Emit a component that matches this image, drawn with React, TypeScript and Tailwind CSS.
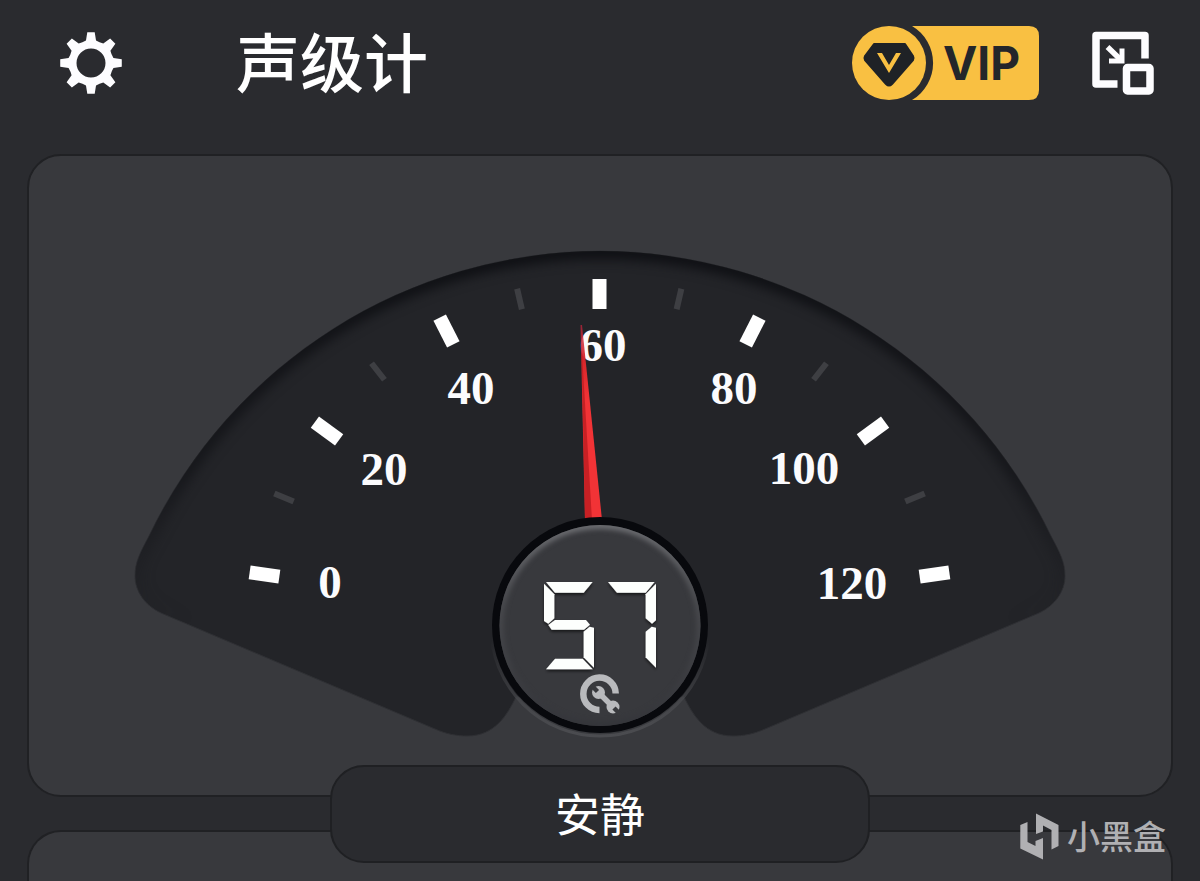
type Tick = { x: number; y: number; angle: number };
type Label = { value: number; x: number; y: number };
type SegmentName = "a" | "b" | "c" | "d" | "e" | "f" | "g";

const majorTicks: Tick[] = [
  { x: 264.5, y: 574.5, angle: -82 },
  { x: 327, y: 431, angle: -54 },
  { x: 446.5, y: 331, angle: -27 },
  { x: 599.5, y: 294, angle: 0 },
  { x: 752.5, y: 331, angle: 27 },
  { x: 873, y: 431, angle: 54 },
  { x: 934.5, y: 574.5, angle: 82 },
];

const minorTicks: Tick[] = [
  { x: 284, y: 497.5, angle: -67 },
  { x: 378, y: 371.5, angle: -38 },
  { x: 519.5, y: 299, angle: -13 },
  { x: 679, y: 299, angle: 13 },
  { x: 820, y: 371.5, angle: 38 },
  { x: 915, y: 497.5, angle: 67 },
];

const labels: Label[] = [
  { value: 0, x: 330, y: 598 },
  { value: 20, x: 384, y: 485 },
  { value: 40, x: 471, y: 404 },
  { value: 60, x: 603, y: 361 },
  { value: 80, x: 734, y: 404 },
  { value: 100, x: 804, y: 484 },
  { value: 120, x: 852, y: 599 },
];

const segmentPoints: Record<SegmentName, string> = {
  a: "6,0 146,0 119,32 33,32",
  b: "150,5 150,115 138,125 119,109 119,37",
  c: "150,137 150,257 119,226 119,149 137,134",
  d: "33,230 116,230 146,262 6,262",
  e: "0,137 0,257 31,226 31,149 13,134",
  f: "0,5 31,37 31,109 13,125 0,117",
  g: "13,129 33,114 126,114 138,128 120,143 23,143",
};

const digitSegments: Record<string, SegmentName[]> = {
  "0": ["a", "b", "c", "d", "e", "f"],
  "1": ["b", "c"],
  "2": ["a", "b", "g", "e", "d"],
  "3": ["a", "b", "g", "c", "d"],
  "4": ["f", "g", "b", "c"],
  "5": ["a", "f", "g", "c", "d"],
  "6": ["a", "f", "g", "c", "d", "e"],
  "7": ["a", "b", "c"],
  "8": ["a", "b", "c", "d", "e", "f", "g"],
  "9": ["a", "b", "c", "d", "f", "g"],
};

const dialPath =
  "M600 251 A502 502 0 0 1 1051 536 C1060 553 1065 562 1065 576 C1065 592 1054 606 1039 613 L765 729 C754 734 743 736 733 736 C705 736 693 715 684 697 H516 C507 715 495 736 467 736 C457 736 446 734 435 729 L161 613 C146 606 135 592 135 576 C135 562 140 553 149 536 A502 502 0 0 1 600 251 Z";

function gearPath(): string {
  const parts: string[] = [];
  for (let i = 0; i < 8; i++) {
    const base = (i * Math.PI) / 4;
    const at = (radius: number, offset: number) =>
      `${(35 + radius * Math.sin(base + offset)).toFixed(2)} ${(35 - radius * Math.cos(base + offset)).toFixed(2)}`;
    parts.push(
      `${i === 0 ? "M" : "L"}${at(23, -0.22)} L${at(31, -0.12)} L${at(31, 0.12)} L${at(23, 0.22)} Q${at(22, 0.39)} ${at(23, 0.565)}`,
    );
  }
  return `${parts.join(" ")} Z M35 20.5 a14.5 14.5 0 1 0 0 29 a14.5 14.5 0 1 0 0 -29 Z`;
}

function SevenSegment({ value, x, y }: { value: number; x: number; y: number }) {
  return (
    <g role="img" aria-label={String(value)} filter="url(#digitShadow)">
      {String(value)
        .split("")
        .map((digit, index) => (
          <g key={index} transform={`translate(${x + index * 62} ${y}) scale(0.3333)`}>
            {digitSegments[digit].map((name) => (
              <polygon key={name} points={segmentPoints[name]} fill="#fdfffd" />
            ))}
          </g>
        ))}
    </g>
  );
}

function Gauge({ value }: { value: number }) {
  return (
    <svg viewBox="29 156 1142 639" className="block h-auto w-full">
      <defs>
        <linearGradient id="needle" x1="0" y1="325" x2="0" y2="400" gradientUnits="userSpaceOnUse">
          <stop offset="0" stopColor="#c8243c" stopOpacity="0.7" />
          <stop offset="0.5" stopColor="#d8282c" />
          <stop offset="1" stopColor="#f23336" />
        </linearGradient>
        <linearGradient id="hubRim" x1="0" y1="525" x2="0" y2="726" gradientUnits="userSpaceOnUse">
          <stop offset="0" stopColor="#6c6d71" />
          <stop offset="0.4" stopColor="#48494d" />
          <stop offset="1" stopColor="#34353a" />
        </linearGradient>
        <linearGradient id="hubEdge" x1="0" y1="640" x2="0" y2="736" gradientUnits="userSpaceOnUse">
          <stop offset="0" stopColor="#4c4d51" stopOpacity="0" />
          <stop offset="1" stopColor="#4b4c50" />
        </linearGradient>
        <linearGradient id="dialRim" x1="0" y1="251" x2="0" y2="620" gradientUnits="userSpaceOnUse">
          <stop offset="0" stopColor="#0e0f13" />
          <stop offset="0.6" stopColor="#131418" stopOpacity="0.8" />
          <stop offset="1" stopColor="#1b1c20" stopOpacity="0" />
        </linearGradient>
        <filter id="soft" x="-10%" y="-10%" width="120%" height="120%" colorInterpolationFilters="sRGB">
          <feGaussianBlur stdDeviation="6" />
        </filter>
        <filter id="hubSoft" x="-10%" y="-10%" width="120%" height="120%" colorInterpolationFilters="sRGB">
          <feGaussianBlur stdDeviation="2.5" />
        </filter>
        <filter id="digitShadow" x="-20%" y="-20%" width="140%" height="140%">
          <feDropShadow dx="0" dy="2" stdDeviation="1.5" floodColor="#000000" floodOpacity="0.6" />
        </filter>
        <clipPath id="dialClip">
          <path d={dialPath} />
        </clipPath>
        <clipPath id="hubClip">
          <circle cx="600" cy="625.5" r="100.5" />
        </clipPath>
      </defs>

      <path d={dialPath} fill="#232428" stroke="#2f3034" strokeWidth="1" />
      <g clipPath="url(#dialClip)">
        <path d={dialPath} fill="none" stroke="url(#dialRim)" strokeWidth="16" filter="url(#soft)" />
      </g>

      {minorTicks.map((tick) => (
        <rect key={tick.x} x="-3" y="-10.5" width="6" height="21" fill="#3e3f43" transform={`translate(${tick.x} ${tick.y}) rotate(${tick.angle})`} />
      ))}
      {majorTicks.map((tick) => (
        <rect key={tick.x} x="-7" y="-15" width="14" height="30" fill="#ffffff" transform={`translate(${tick.x} ${tick.y}) rotate(${tick.angle})`} />
      ))}
      {labels.map((label) => (
        <text
          key={label.value}
          x={label.x}
          y={label.y}
          textAnchor="middle"
          className="fill-[#fbfbfd] font-['Liberation_Serif',serif] text-[47px] font-bold"
        >
          {label.value}
        </text>
      ))}

      <path d="M580.5 325 H582 L602 520 H585 Z" fill="url(#needle)" />
      <path d="M581.5 345 L585 520 H592 Z" fill="#bd1c20" fillOpacity="0.8" />

      <circle cx="600" cy="627" r="109" fill="none" stroke="url(#hubEdge)" strokeWidth="3" />
      <circle cx="600" cy="625" r="108" fill="#08090d" />
      <circle cx="600" cy="625.5" r="100.5" fill="#38393d" />
      <g clipPath="url(#hubClip)">
        <circle cx="600" cy="625.5" r="100.5" fill="none" stroke="url(#hubRim)" strokeWidth="8" filter="url(#hubSoft)" />
      </g>

      <SevenSegment value={value} x={544} y={582} />

      <g stroke="#b9babd" fill="none">
        <path d="M599.5 710 A16.2 16.2 0 1 1 615.7 693.5" strokeWidth="6.5" />
        <circle cx="598.5" cy="692.5" r="6.5" fill="#b9babd" stroke="none" />
        <circle cx="613" cy="707" r="6.5" fill="#b9babd" stroke="none" />
        <path d="M599 693 L613 707" strokeWidth="5.5" />
        <path d="M597.5 691.5 L591 685" stroke="#38393d" strokeWidth="4.5" />
        <path d="M614 708 L621 715" stroke="#38393d" strokeWidth="4.5" />
      </g>
    </svg>
  );
}

function VipButton() {
  return (
    <button type="button" className="relative flex h-[74px] w-[187px] items-center pl-[91px]">
      <svg viewBox="0 0 187 74" className="absolute inset-0 h-full w-full" aria-hidden="true">
        <path d="M60 0 H177 Q187 0 187 10 V64 Q187 74 177 74 H60 A43 43 0 0 0 60 0 Z" fill="#f9c042" />
        <circle cx="37" cy="37" r="37" fill="#f9c042" />
        <path
          d="M22 18 H53 L61 30 Q62 32 61 34 L40 58 Q37 61 34 58 L13 34 Q12 32 13 30 Z"
          fill="#1f2226"
          stroke="#1f2226"
          strokeWidth="2"
          strokeLinejoin="round"
        />
        <path d="M25 27 H30 L37 39 L44 27 H49 L37 47 Z" fill="#f9c042" />
      </svg>
      <span className="relative font-['Inter',sans-serif] text-[46px] leading-none font-bold text-[#24262a]">VIP</span>
    </button>
  );
}

export default function App() {
  return (
    <div className="relative flex min-h-screen flex-col overflow-hidden bg-[#2a2b2f] px-[27px] font-['Noto_Sans_CJK_SC',sans-serif] text-white">
      <header className="flex h-[154px] items-start justify-between pt-[26px] pr-[19px] pl-[29px]">
        <div className="flex h-[74px] items-center gap-[110px]">
          <button type="button" aria-label="设置">
            <svg viewBox="0 0 70 70" className="block size-[70px]">
              <path d={gearPath()} fill="#fdfdff" fillRule="evenodd" />
            </svg>
          </button>
          <h1 className="pb-2 text-[64px] leading-none font-medium">声级计</h1>
        </div>
        <div className="flex h-[74px] items-center gap-[53px]">
          <VipButton />
          <button type="button" aria-label="小窗">
            <svg viewBox="0 0 62 64" className="block h-[64px] w-[62px]" fill="none" stroke="#fdfdff">
              <path d="M53 27.5 V4.5 H4 V53 H25.5" strokeWidth="7.5" strokeLinejoin="round" />
              <rect x="34.5" y="36.5" width="23.5" height="23.5" rx="1" strokeWidth="7.5" strokeLinejoin="round" />
              <path d="M15.5 16 L30 30" strokeWidth="5.5" />
              <path d="M30 17.5 V30 H17" strokeWidth="5" />
            </svg>
          </button>
        </div>
      </header>

      <main className="flex flex-1 flex-col">
        <section className="rounded-[34px] border-2 border-[#202124] bg-[#38393d]">
          <Gauge value={57} />
        </section>
        <div className="z-10 -mt-8 flex h-[98px] w-[540px] items-center justify-center self-center rounded-[34px] border-2 border-[#1f2023] bg-[#2a2b2f]">
          <p className="pb-1 text-[45px] leading-none">安静</p>
        </div>
        <section className="-mt-[33px] flex-1 rounded-t-[34px] border-2 border-b-0 border-[#202124] bg-[#38393d]" />
      </main>

      <div className="absolute right-[34px] bottom-5 z-20 flex items-center gap-2 text-[#b0b0b3]">
        <svg viewBox="0 0 40 48" className="h-12 w-10" fill="currentColor" aria-hidden="true">
          <path d="M1.3 12 L8.5 9 V29 L16.5 33 V28 L24 25 V46.500 L1.300 35.5 Z" />
          <path d="M17 0.5 L39.5 12 V33 L32.5 36.5 V17 L24 12.5 V18.5 L17 21 Z" />
        </svg>
        <span className="pb-1 text-[33px] leading-none font-medium">小黑盒</span>
      </div>
    </div>
  );
}
